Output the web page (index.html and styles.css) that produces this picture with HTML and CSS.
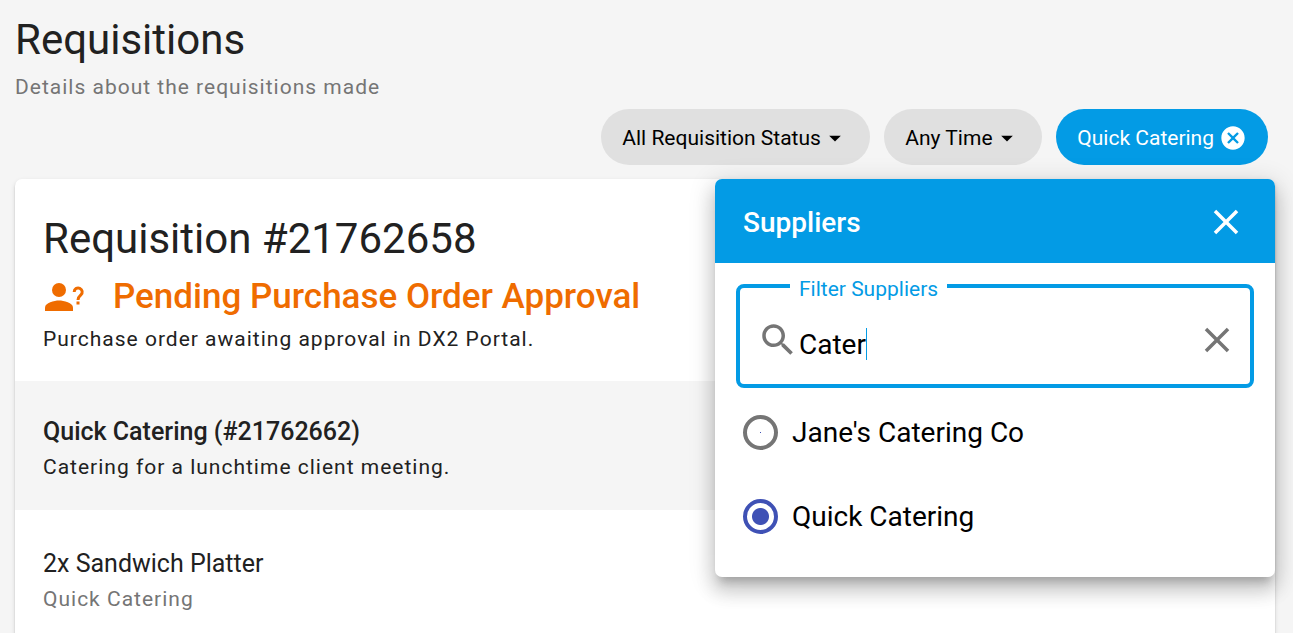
FILE: index.html
```html
<!DOCTYPE html>
<html lang="en">
<head>
<meta charset="utf-8">
<meta name="viewport" content="width=device-width, initial-scale=1">
<title>Requisitions</title>
<link rel="stylesheet" href="styles.css">
</head>
<body>
<main class="page">
  <header class="page-header">
    <h1 class="title">Requisitions</h1>
    <p class="note muted">Details about the requisitions made</p>
  </header>

  <div class="filters">
    <div class="chip">
      <select class="chip-select" aria-label="Requisition status"><option>All Requisition Status</option></select>
      <svg class="chip-icon" viewBox="0 0 24 24" aria-hidden="true"><path d="M7 10l5 5 5-5z"/></svg>
    </div>
    <div class="chip">
      <select class="chip-select" aria-label="Time range"><option>Any Time</option></select>
      <svg class="chip-icon" viewBox="0 0 24 24" aria-hidden="true"><path d="M7 10l5 5 5-5z"/></svg>
    </div>
    <button class="chip chip-active" type="button">
      Quick Catering
      <svg class="chip-icon" viewBox="0 0 24 24" aria-hidden="true"><path d="M12 2C6.47 2 2 6.47 2 12s4.470 10 10 10 10-4.470 10-10S17.530 2 12 2zm5 13.590L15.590 17 12 13.410 8.410 17 7 15.590 10.590 12 7 8.410 8.410 7 12 10.590 15.590 7 17 8.410 13.410 12 17 15.590z"/></svg>
    </button>

    <section class="panel" role="dialog" aria-labelledby="panel-title">
      <header class="panel-header">
        <h2 class="panel-title" id="panel-title">Suppliers</h2>
        <button class="icon-button" type="button" aria-label="Close">
          <svg class="icon" viewBox="0 0 24 24" aria-hidden="true"><path d="M19 6.410L17.590 5 12 10.590 6.410 5 5 6.410 10.590 12 5 17.590 6.410 19 12 13.410 17.590 19 19 17.590 13.410 12z"/></svg>
        </button>
      </header>
      <fieldset class="field">
        <legend class="field-legend"><label for="supplier-filter">Filter Suppliers</label></legend>
        <div class="field-row">
          <svg class="icon" viewBox="0 0 24 24" aria-hidden="true"><path d="M15.500 14h-.790l-.280-.270C15.410 12.590 16 11.110 16 9.500 16 5.910 13.090 3 9.500 3S3 5.910 3 9.500 5.910 16 9.500 16c1.610 0 3.090-.590 4.230-1.570l.270.280v.790l5 4.990L20.490 19l-4.990-5zm-6 0C7.010 14 5 11.990 5 9.500S7.010 5 9.500 5 14 7.010 14 9.500 11.990 14 9.500 14z"/></svg>
          <label class="field-text" for="supplier-filter">
            <input class="field-input" id="supplier-filter" type="text" value="Cater">
            <span class="caret" aria-hidden="true"></span>
          </label>
          <button class="icon-button" type="button" aria-label="Clear">
            <svg class="icon" viewBox="0 0 24 24" aria-hidden="true"><path d="M19 6.410L17.590 5 12 10.590 6.410 5 5 6.410 10.590 12 5 17.590 6.410 19 12 13.410 17.590 19 19 17.590 13.410 12z"/></svg>
          </button>
        </div>
      </fieldset>
      <div class="options" role="radiogroup" aria-labelledby="panel-title">
        <label class="option"><input class="radio" type="radio" name="supplier">Jane's Catering Co</label>
        <label class="option"><input class="radio" type="radio" name="supplier" checked>Quick Catering</label>
      </div>
    </section>
  </div>

  <article class="card">
    <section class="card-head">
      <h2 class="title card-title">Requisition #21762658</h2>
      <div class="status">
        <svg class="status-icon" viewBox="0 0 42 42" aria-hidden="true">
          <circle cx="16" cy="14" r="7"/>
          <path d="M2 35v-3.500C2 26.850 11.330 24.500 16 24.500S30 26.850 30 31.500V35z"/>
          <path class="status-mark" d="M31.200 16a4 4 0 1 1 6.700 2.900C36.200 20.400 35 21.300 35 24"/>
          <rect x="33.500" y="25.500" width="3" height="3"/>
        </svg>
        <h3 class="status-text">Pending Purchase Order Approval</h3>
      </div>
      <p class="note">Purchase order awaiting approval in DX2 Portal.</p>
    </section>
    <section class="group">
      <h3 class="group-title">Quick Catering (#21762662)</h3>
      <p class="note">Catering for a lunchtime client meeting.</p>
    </section>
    <section class="item">
      <h4 class="item-title">2x Sandwich Platter</h4>
      <p class="note muted">Quick Catering</p>
    </section>
  </article>
</main>
</body>
</html>
```
FILE: styles.css
```css
:root {
  --blue: #039be5;
  --ink: #212121;
  --muted: #757575;
}

* {
  box-sizing: border-box;
}

body {
  margin: 0;
  background: #f5f5f5;
  color: var(--ink);
  font-family: Roboto, sans-serif;
  font-size: 21px;
}

h1, h2, h3, h4, p {
  margin: 0;
  font-weight: 400;
}

button, input, select {
  font: inherit;
  color: inherit;
}

.page {
  padding: 12px 18px 0 15px;
}

.title {
  font-size: 42px;
  line-height: 56px;
}

.note {
  line-height: 28px;
  letter-spacing: 1px;
}

.muted {
  color: var(--muted);
}

.page-header {
  display: grid;
  gap: 5px;
}

.filters {
  position: relative;
  display: flex;
  justify-content: flex-end;
  gap: 14px;
  padding: 8px 7px 14px;
}

.chip {
  display: flex;
  align-items: center;
  height: 56px;
  padding: 1px 21px 0;
  border: 0;
  border-radius: 28px;
  background: #e0e0e0;
  color: #000;
}

.chip-active {
  gap: 5px;
  background: var(--blue);
  color: #fff;
}

.chip-select {
  appearance: none;
  padding: 0;
  border: 0;
  background: none;
}

.chip-icon {
  width: 28px;
  height: 28px;
  fill: currentColor;
}

.icon {
  display: block;
  flex: none;
  width: 42px;
  height: 42px;
  fill: currentColor;
}

.icon-button {
  padding: 0;
  border: 0;
  background: none;
}

.panel {
  position: absolute;
  z-index: 1;
  top: 100%;
  right: 0;
  width: 560px;
  max-width: 100%;
  padding-bottom: 19px;
  border-radius: 7px;
  background: #fff;
  color: #000;
  box-shadow: 0 9px 9px -5px rgba(0, 0, 0, .2), 0 14px 18px 2px rgba(0, 0, 0, .14), 0 5px 25px 4px rgba(0, 0, 0, .12);
}

.panel-header {
  display: flex;
  align-items: center;
  justify-content: space-between;
  height: 84px;
  padding: 2px 28px 0;
  border-radius: 7px 7px 0 0;
  background: var(--blue);
  color: #fff;
}

.panel-title {
  font-size: 28px;
  font-weight: 500;
}

.field {
  margin: 9px 21px 0;
  padding: 0 12px 0 17px;
  border: 4px solid var(--blue);
  border-radius: 8px;
}

.field-legend {
  margin-left: 33px;
  padding: 6px 9px 0;
  color: var(--blue);
  line-height: 22px;
}

.field-row {
  display: flex;
  align-items: flex-start;
  padding: 19px 0 23px;
  color: var(--muted);
}

.field-text {
  display: flex;
  flex: 1;
  padding-top: 9px;
  color: #000;
  font-size: 28px;
}

.field-input {
  field-sizing: content;
  height: 32px;
  padding: 0;
  border: 0;
  outline: 0;
  background: none;
}

.caret {
  width: 1px;
  height: 32px;
  background: var(--blue);
}

.options {
  display: grid;
  padding: 2px 28px 0;
}

.option {
  display: flex;
  align-items: center;
  gap: 14px;
  height: 84px;
  font-size: 28px;
}

.radio {
  appearance: none;
  width: 35px;
  height: 35px;
  margin: 0;
  border: 4px solid var(--muted);
  border-radius: 50%;
  background: radial-gradient(circle, #3f51b5 0, transparent 1px);
}

.radio:checked {
  border-color: #3f51b5;
  background: radial-gradient(circle, #3f51b5 8px, transparent 9px);
}

.card {
  border-radius: 7px;
  background: #fff;
  box-shadow: 0 4px 2px -2px rgba(0, 0, 0, .2), 0 2px 2px rgba(0, 0, 0, .14), 0 2px 5px rgba(0, 0, 0, .12);
}

.card-head {
  padding: 28px;
}

.card-title {
  line-height: 64px;
}

.status {
  display: flex;
  align-items: center;
  gap: 28px;
  padding: 5px 0 7px;
  color: #ef6c00;
}

.status-icon {
  width: 42px;
  height: 42px;
  fill: currentColor;
}

.status-mark {
  fill: none;
  stroke: currentColor;
  stroke-width: 3;
}

.status-text {
  font-size: 35px;
  font-weight: 500;
  line-height: 42px;
}

.group {
  padding: 30px 28px 29px;
  background: #f5f5f5;
}

.item {
  padding: 33px 28px;
}

.group-title, .item-title {
  font-size: 25px;
  line-height: 42px;
}

.group-title {
  font-weight: 500;
}
```
